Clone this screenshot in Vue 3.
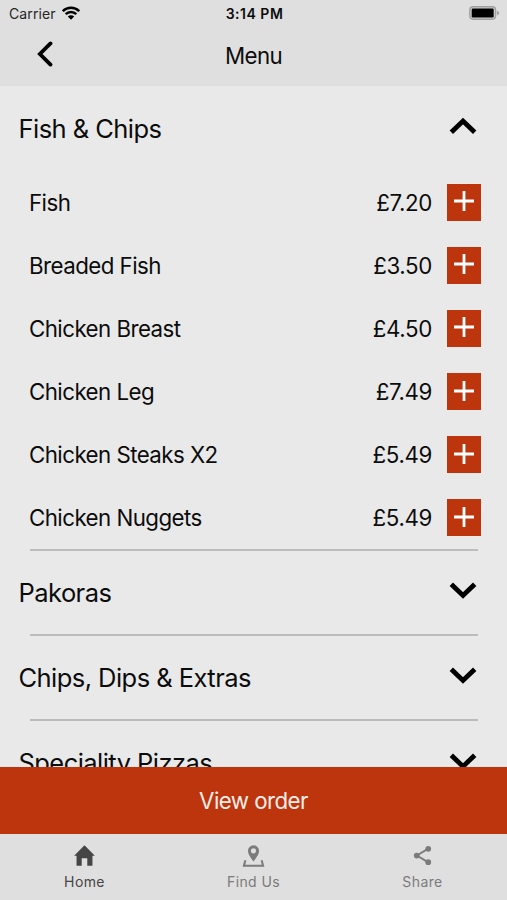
<script setup>
const items = [
  { name: 'Fish', price: '£7.20' },
  { name: 'Breaded Fish', price: '£3.50' },
  { name: 'Chicken Breast', price: '£4.50' },
  { name: 'Chicken Leg', price: '£7.49' },
  { name: 'Chicken Steaks X2', price: '£5.49' },
  { name: 'Chicken Nuggets', price: '£5.49' },
]
const closed = ['Pakoras', 'Chips, Dips & Extras', 'Speciality Pizzas']
</script>

<template>
  <div class="screen">
    <header class="header">
      <div class="status">
        <div class="carrier">
          <span>Carrier</span>
          <svg class="wifi" viewBox="0 0 18 14">
            <path d="M.8 5.200a11.600 11.600 0 0 1 16.400 0M3.700 8.200a7.500 7.500 0 0 1 10.600 0" fill="none" stroke="#000" stroke-width="2.500" />
            <path d="M5.800 10.600a4.500 4.500 0 0 1 6.400 0L9 13.800z" />
          </svg>
        </div>
        <span class="time">3:14 PM</span>
        <svg class="battery" viewBox="0 0 31 14">
          <rect x=".8" y=".8" width="25.800" height="12.400" rx="3.400" fill="#d0d0d0" stroke="#a0a0a0" stroke-width="1.400" />
          <rect x="2.700" y="2.600" width="22" height="8.800" rx="1.200" />
          <path d="M28 4.800q2.300.7 2.300 2.200T28 9.200z" fill="#a0a0a0" />
        </svg>
      </div>
      <div class="nav">
        <svg class="back" viewBox="0 0 16 26"><path d="M13.500 2.400 2.900 13l10.600 10.600" fill="none" stroke="#000" stroke-width="3.800" stroke-linecap="round" /></svg>
        <h1>Menu</h1>
        <span></span>
      </div>
    </header>

    <main class="list">
      <section>
        <div class="category open">
          <span>Fish &amp; Chips</span>
          <svg class="chevron" viewBox="0 0 28 18"><path d="M2.300 15.300 14 4l11.700 11.300" fill="none" stroke="#000" stroke-width="4.800" /></svg>
        </div>
        <div v-for="item in items" :key="item.name" class="item">
          <span class="name">{{ item.name }}</span>
          <span class="price">{{ item.price }}</span>
          <button class="add" aria-label="Add">
            <svg viewBox="0 0 20 20"><path d="M10 0v20M0 10h20" stroke="#fff" stroke-width="2.800" /></svg>
          </button>
        </div>
      </section>
      <section v-for="name in closed" :key="name" class="closed">
        <div class="category">
          <span>{{ name }}</span>
          <svg class="chevron" viewBox="0 0 28 18"><path d="M2.300 3.200 14 14.500 25.700 3.200" fill="none" stroke="#000" stroke-width="4.800" /></svg>
        </div>
      </section>
    </main>

    <button class="order">View order</button>

    <nav class="tabs">
      <div class="tab active">
        <svg viewBox="0 0 24 24"><path d="M12 1.400 1.200 12.300h2.500v10.300h5.400v-7.700h5.800v7.700h5.400V12.300h2.500z" fill="currentColor" /></svg>
        <span>Home</span>
      </div>
      <div class="tab">
        <svg viewBox="0 0 24 24">
          <path d="M12 18.200C8.600 14 6.200 10.700 6.200 7.100a5.800 5.800 0 0 1 11.600 0c0 3.600-2.400 6.900-5.800 11.100zM12 9.800a2.700 2.700 0 1 0 0-5.400 2.700 2.700 0 0 0 0 5.400z" fill="currentColor" fill-rule="evenodd" />
          <path d="M3.500 17 2 22.600h20L20.500 17" fill="none" stroke="currentColor" stroke-width="2.100" />
        </svg>
        <span>Find Us</span>
      </div>
      <div class="tab">
        <svg viewBox="0 0 24 24">
          <path d="M18 4.800 6.200 12 18 19.200" fill="none" stroke="currentColor" stroke-width="1.900" />
          <circle cx="18" cy="5" r="3" fill="currentColor" />
          <circle cx="6" cy="12" r="3" fill="currentColor" />
          <circle cx="18" cy="19" r="3" fill="currentColor" />
        </svg>
        <span>Share</span>
      </div>
    </nav>
  </div>
</template>

<style>
body { margin: 0; background: #e9e9e9; }
</style>

<style scoped>
.screen { height: 900px; display: flex; flex-direction: column; overflow: hidden; background: #e9e9e9; color: #0c0c0c; font-family: Inter, sans-serif; }
.header { height: 86px; flex: none; background: #dfdfdf; }
.status { height: 27px; padding: 0 7px 0 9px; display: grid; grid-template-columns: 1fr auto 1fr; align-items: center; font-size: 14px; }
.carrier { display: flex; align-items: center; gap: 6px; color: #262626; letter-spacing: .1px; }
.wifi { width: 18px; height: 14px; margin-top: -2px; }
.time { font-weight: 600; letter-spacing: .5px; }
.battery { width: 31px; height: 14px; margin-top: -1px; justify-self: end; }
.nav { height: 56px; padding: 0 37px; display: grid; grid-template-columns: 1fr auto 1fr; align-items: center; }
.back { width: 16px; height: 26px; margin-top: -2px; }
h1 { margin: 0; font-size: 22.300px; font-weight: 400; letter-spacing: -.6px; }
.list { flex: 1; min-height: 0; overflow: hidden; }
.category { box-sizing: border-box; height: 85.100px; padding: 1.200px 30.500px 0 18.500px; display: flex; align-items: center; justify-content: space-between; font-size: 25.500px; letter-spacing: -.55px; }
.category.open { height: 84.700px; padding-top: 0; }
.chevron { width: 28px; height: 18px; margin-top: -4px; }
.item { height: 63.100px; padding: 0 26px 0 29px; display: flex; align-items: center; font-size: 22.300px; letter-spacing: -.35px; }
.name { flex: 1; letter-spacing: -.55px; }
.price { margin-right: 15px; }
.add { width: 34px; height: 37px; padding: 0 0 2px; border: 0; background: #bd350c; display: flex; align-items: center; justify-content: center; }
.add svg { width: 20px; height: 20px; }
.closed { background: linear-gradient(#bcbcbc, #bcbcbc) 30px 0 / 448px 2px no-repeat; }
.order { flex: none; height: 67px; border: 0; padding: 0; background: #bd350c; color: #fbeee9; font: 400 22.300px Inter, sans-serif; letter-spacing: -.55px; }
.tabs { flex: none; height: 66px; display: grid; grid-template-columns: repeat(3, 1fr); background: #dfdfdf; }
.tab { display: flex; flex-direction: column; align-items: center; padding-top: 10px; gap: 6px; color: #7b7b7b; font-size: 14px; line-height: 18px; letter-spacing: .4px; }
.tab svg { width: 23px; height: 23px; }
.active { color: #454545; }
</style>
